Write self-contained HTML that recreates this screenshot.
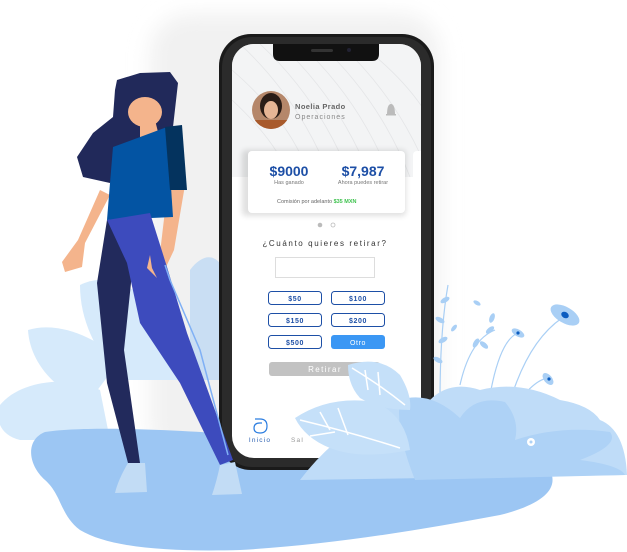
<!DOCTYPE html>
<html><head><meta charset="utf-8"><style>
html,body{margin:0;padding:0;width:627px;height:552px;overflow:hidden;background:#fff}
svg{display:block}
text{font-family:"Liberation Sans",sans-serif}
</style></head><body>
<svg width="627" height="552" viewBox="0 0 627 552" xmlns="http://www.w3.org/2000/svg">
<defs>
<filter id="bl" x="-20%" y="-20%" width="140%" height="140%"><feGaussianBlur stdDeviation="10"/></filter>
<filter id="sh" x="-20%" y="-20%" width="140%" height="140%"><feGaussianBlur stdDeviation="3"/></filter>
<clipPath id="scr"><rect x="232" y="44" width="189" height="414" rx="22"/></clipPath>
<clipPath id="av"><circle cx="271" cy="110" r="19"/></clipPath>
</defs>
<rect x="150" y="14" width="290" height="450" rx="40" fill="#f1f1f1" filter="url(#bl)"/>
<path d="M0 405 C20 380 70 375 100 390 L110 440 L20 440 C0 435 -5 420 0 405Z" fill="#d6eafb"/>
<path d="M28 330 C60 320 100 340 120 360 L90 400 C60 395 30 365 28 330Z" fill="#d6eafb"/>
<path d="M80 285 C110 270 140 290 170 320 L200 380 L120 380 C95 350 80 320 80 285Z" fill="#d6eafb"/>
<path d="M190 270 C205 250 220 255 225 275 L225 380 L190 380Z" fill="#c9def3"/>
<path d="M45 432 C90 425 200 430 300 440 C400 448 520 455 550 470 C560 490 540 505 500 515 C420 530 330 545 240 550 C170 552 110 548 80 530 C60 515 62 495 45 480 C28 465 25 440 45 432Z" fill="#9cc6f3"/>
<rect x="219" y="34" width="215" height="436" rx="32" fill="#1a1a1a"/>
<rect x="222" y="37" width="209" height="430" rx="30" fill="#2b2b2b"/>
<rect x="232" y="44" width="189" height="414" rx="22" fill="#fff"/>
<g clip-path="url(#scr)">
<rect x="232" y="44" width="189" height="133" fill="#f3f4f5"/>
<g stroke="#e4e5e7" stroke-width="0.8" fill="none">
<path d="M240 44 Q300 100 330 177"/><path d="M260 44 Q320 100 350 177"/><path d="M280 44 Q340 100 370 177"/><path d="M300 44 Q360 100 390 177"/><path d="M320 44 Q380 100 410 177"/><path d="M340 44 Q400 100 430 177"/><path d="M360 44 Q420 90 440 140"/><path d="M232 70 Q290 120 310 177"/><path d="M232 100 Q275 140 290 177"/>
</g>
<rect x="242" y="150" width="164" height="66" rx="4" fill="#000" opacity="0.12" filter="url(#sh)"/>
<rect x="248" y="151" width="157" height="62" rx="4" fill="#fff"/>
<rect x="413" y="151" width="20" height="62" rx="4" fill="#fff"/>
</g>
<path d="M273 44 H379 V54 Q379 61 372 61 H280 Q273 61 273 54Z" fill="#111"/>
<rect x="311" y="49" width="22" height="3" rx="1.5" fill="#333"/>
<circle cx="349" cy="50" r="2" fill="#223"/>
<circle cx="271" cy="110" r="19" fill="#b5876a"/>
<g clip-path="url(#av)"><ellipse cx="271" cy="106" rx="11" ry="13" fill="#2a1c16"/><ellipse cx="271" cy="110" rx="7" ry="9" fill="#e6b595"/><rect x="255" y="120" width="32" height="12" fill="#a85a2c"/></g>
<text x="295" y="109" font-size="7.5" font-weight="bold" fill="#666" letter-spacing="0.4">Noelia Prado</text>
<text x="295" y="119" font-size="7" fill="#888" letter-spacing="1">Operaciones</text>
<path d="M387 115 Q387 104 391 104 Q395 104 395 115 Z" fill="#bbb"/><rect x="386" y="114" width="10" height="1.5" fill="#bbb"/>
<text x="289" y="176" font-size="14" font-weight="bold" fill="#1d4fa6" text-anchor="middle">$9000</text>
<text x="363" y="176" font-size="14" font-weight="bold" fill="#1d4fa6" text-anchor="middle">$7,987</text>
<text x="289" y="184" font-size="5.5" fill="#777" text-anchor="middle">Has ganado</text>
<text x="363" y="184" font-size="5.5" fill="#777" text-anchor="middle">Ahora puedes retirar</text>
<text x="277" y="203" font-size="5.5" fill="#666">Comisión por adelanto <tspan fill="#3ec24e" font-weight="bold">$35 MXN</tspan></text>
<circle cx="320" cy="225" r="2.3" fill="#bbb"/><circle cx="333" cy="225" r="2" fill="none" stroke="#bbb" stroke-width="0.8"/>
<text x="325" y="246" font-size="8" fill="#333" text-anchor="middle" letter-spacing="1.6">¿Cuánto quieres retirar?</text>
<rect x="275.5" y="257.5" width="99" height="20" fill="#fff" stroke="#ddd"/>
<g fill="#fff" stroke="#1d4fa6" stroke-width="1">
<rect x="268.5" y="291.5" width="53" height="13" rx="3"/><rect x="331.5" y="291.5" width="53" height="13" rx="3"/>
<rect x="268.5" y="313.5" width="53" height="13" rx="3"/><rect x="331.5" y="313.5" width="53" height="13" rx="3"/>
<rect x="268.5" y="335.5" width="53" height="13" rx="3"/>
</g>
<rect x="331" y="335" width="54" height="14" rx="3" fill="#3b97f4"/>
<g font-size="7" font-weight="bold" fill="#1d4fa6" text-anchor="middle" letter-spacing="0.6">
<text x="295" y="301">$50</text><text x="358" y="301">$100</text>
<text x="295" y="323">$150</text><text x="358" y="323">$200</text>
<text x="295" y="345">$500</text><text x="358" y="345" fill="#fff" font-weight="normal">Otro</text>
</g>
<rect x="269" y="362" width="111" height="14" rx="3" fill="#c2c2c2"/>
<text x="325" y="372" font-size="8" fill="#fff" text-anchor="middle" letter-spacing="1.4">Retirar</text>
<path d="M255 419 H260 Q267 419 267 426 Q267 433 260 433 Q254 433 254 428 Q254 423 260 423 H262" fill="none" stroke="#2b7de0" stroke-width="1.2"/>
<text x="260" y="442" font-size="6.5" fill="#2b5fb0" text-anchor="middle" letter-spacing="1.2">Inicio</text>
<text x="291" y="442" font-size="6.5" fill="#999" letter-spacing="1.2">Sal</text>
<g stroke="#a9cff5" stroke-width="1.2" fill="none">
<path d="M460 385 Q470 340 495 330"/><path d="M490 395 Q500 340 518 333"/><path d="M512 395 Q530 340 562 318"/><path d="M520 400 Q535 380 548 378"/><path d="M440 400 Q440 330 448 285"/>
</g>
<g fill="#a9cff5">
<ellipse cx="565" cy="315" rx="16" ry="8" transform="rotate(30 565 315)"/>
<ellipse cx="518" cy="333" rx="7" ry="3.5" transform="rotate(30 518 333)"/>
<ellipse cx="548" cy="379" rx="7" ry="4" transform="rotate(50 548 379)"/>
<ellipse cx="490" cy="330" rx="5" ry="2.5" transform="rotate(-40 490 330)"/><ellipse cx="484" cy="345" rx="5" ry="2.5" transform="rotate(40 484 345)"/><ellipse cx="476" cy="343" rx="5" ry="2.5" transform="rotate(-60 476 343)"/><ellipse cx="492" cy="318" rx="5" ry="2.5" transform="rotate(-70 492 318)"/>
<ellipse cx="445" cy="300" rx="5" ry="2.5" transform="rotate(-30 445 300)"/><ellipse cx="440" cy="320" rx="5" ry="2.5" transform="rotate(30 440 320)"/><ellipse cx="443" cy="340" rx="5" ry="2.5" transform="rotate(-30 443 340)"/><ellipse cx="438" cy="360" rx="5" ry="2.5" transform="rotate(30 438 360)"/>
<ellipse cx="477" cy="303" rx="4" ry="2" transform="rotate(30 477 303)"/><ellipse cx="454" cy="328" rx="4" ry="2" transform="rotate(-50 454 328)"/>
</g>
<g fill="#0b5cc0"><ellipse cx="565" cy="315" rx="4" ry="3" transform="rotate(30 565 315)"/><circle cx="518" cy="333" r="1.6"/><circle cx="549" cy="379" r="1.6"/></g>
<path d="M430 400 Q450 380 480 390 Q520 380 560 400 Q590 405 600 420 Q625 430 627 475 L300 480 Q330 440 380 410 Q400 395 430 400Z" fill="#bfdcf8"/>
<path d="M400 400 Q430 390 460 418 Q475 395 505 402 Q520 420 515 440 Q560 425 610 432 Q620 445 580 460 Q620 465 625 475 L415 480 Q395 430 400 400Z" fill="#aed2f6"/>
<path d="M295 418 Q330 395 375 402 Q405 415 410 450 Q360 460 330 448 Q305 438 295 418Z" fill="#c5e0f9"/>
<path d="M348 365 Q380 355 400 375 Q412 395 410 410 Q380 410 360 398 Q348 385 348 365Z" fill="#c5e0f9"/>
<g stroke="#fff" stroke-width="1.5" fill="none"><path d="M300 420 Q350 432 400 448"/><path d="M320 412 L330 430"/><path d="M338 408 L348 435"/><path d="M310 436 L335 432"/><path d="M352 368 Q380 385 405 405"/><path d="M365 370 L368 390"/><path d="M378 372 L380 395"/></g>
<circle cx="531" cy="442" r="4" fill="#fff"/><circle cx="531" cy="442" r="1.5" fill="#aed2f6"/>
<path d="M117 80 L140 73 L170 72 L178 83 L173 127 L157 137 L127 150 L110 183 L83 177 L77 157 L93 133 L113 117 L115 90Z" fill="#21295a"/>
<ellipse cx="145" cy="112" rx="17" ry="15" fill="#f4b48c"/>
<path d="M140 118 L155 120 L160 140 L140 145Z" fill="#f4b48c"/>
<path d="M100 190 L110 195 L85 243 L82 267 L65 272 L62 262 L78 240Z" fill="#f4b48c"/>
<path d="M168 185 L185 185 L174 250 L166 267 L157 278 L147 268 L160 253Z" fill="#f4b48c"/>
<path d="M113 147 L167 127 L173 217 L107 220 L110 183Z" fill="#0354a3"/>
<path d="M165 127 L182 125 L187 190 L170 190Z" fill="#04335e"/>
<path d="M107 220 L135 222 L131 283 L124 350 L140 463 L128 463 L107 383 L97 283Z" fill="#222a5c"/>
<path d="M107 220 L150 213 L167 267 L187 333 L233 460 L220 465 L180 383 L140 323 L127 263Z" fill="#3d4bbd"/>
<path d="M165 265 L170 280 L200 350 L228 455" stroke="#7fb0f5" stroke-width="1.5" fill="none"/>
<path d="M150 255 L152 268 L157 278 L147 268Z" fill="#f4b48c"/>
<path d="M128 463 L145 463 L147 492 L115 493 Q118 480 128 463Z" fill="#c2dcf5"/>
<path d="M220 465 L235 462 L242 494 L212 495 Q217 480 220 465Z" fill="#c2dcf5"/>
</svg>
</body></html>
